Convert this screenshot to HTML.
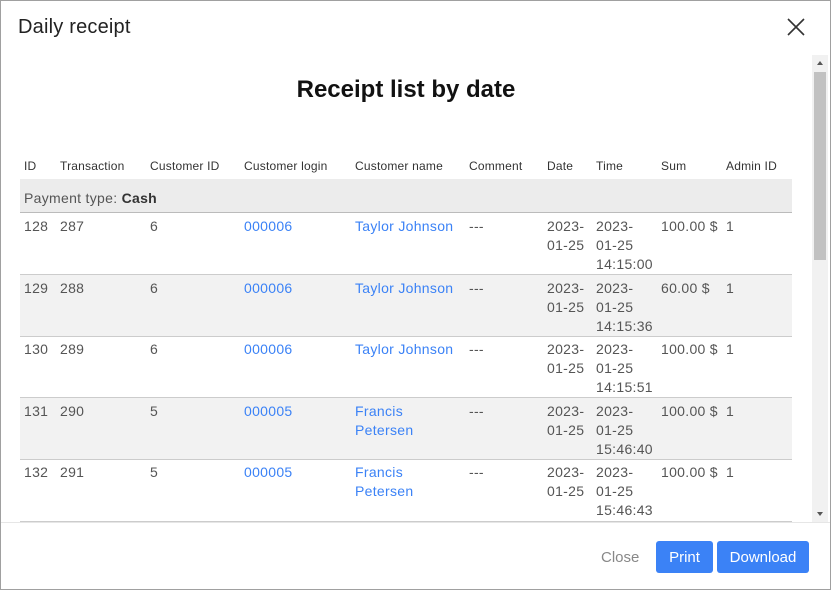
<!DOCTYPE html>
<html><head><meta charset="utf-8"><style>
*{margin:0;padding:0;box-sizing:border-box}
body{width:831px;height:590px;background:#fff;font-family:"Liberation Sans",Arial,sans-serif;color:#444;position:relative;overflow:hidden}
.frame{position:absolute;left:0;top:0;width:831px;height:590px;border:1px solid #a0a0a0}
.title{position:absolute;left:18px;top:16px;font-size:20px;color:#222;letter-spacing:0.2px}
.close{position:absolute;left:786px;top:17px;width:20px;height:20px}
.h1{position:absolute;left:0;width:812px;top:76px;text-align:center;font-size:24px;font-weight:bold;color:#111}
.hd{position:absolute;top:159px;font-size:12px;color:#333;letter-spacing:0.2px}
.band{position:absolute;left:20px;width:772px}
.c{position:absolute;font-size:14px;line-height:19px;color:#555;letter-spacing:0.3px}
.l{color:#3b82f6}
.sb{position:absolute;left:812px;top:55px;width:16px;height:467px;background:#f1f1f1}
.thumb{position:absolute;left:814px;top:72px;width:12px;height:188px;background:#c1c1c1}
.btn{position:absolute;top:541px;height:32px;background:#3b82f6;color:#fff;font-size:15px;border-radius:3px;text-align:center;line-height:33px}
</style></head><body>
<div class="frame"></div>
<div class="title">Daily receipt</div>
<svg class="close" viewBox="0 0 20 20"><path d="M2 2L18 18M18 2L2 18" stroke="#333" stroke-width="1.6"/></svg>
<div class="h1">Receipt list by date</div>
<div class="hd" style="left:24px">ID</div>
<div class="hd" style="left:60px">Transaction</div>
<div class="hd" style="left:150px">Customer ID</div>
<div class="hd" style="left:244px">Customer login</div>
<div class="hd" style="left:355px">Customer name</div>
<div class="hd" style="left:469px">Comment</div>
<div class="hd" style="left:547px">Date</div>
<div class="hd" style="left:596px">Time</div>
<div class="hd" style="left:661px">Sum</div>
<div class="hd" style="left:726px">Admin ID</div>
<div class="band" style="top:179px;height:34px;background:#ececec;border-bottom:1px solid #bbb"></div>
<div class="c" style="left:24px;top:189px;font-size:14px">Payment type: <b style="color:#333">Cash</b></div>
<div class="band" style="top:213px;height:62px;border-bottom:1px solid #ccc"></div>
<div class="band" style="top:275px;height:62px;background:#f2f2f2;border-bottom:1px solid #ccc"></div>
<div class="band" style="top:337px;height:61px;border-bottom:1px solid #ccc"></div>
<div class="band" style="top:398px;height:62px;background:#f2f2f2;border-bottom:1px solid #ccc"></div>
<div class="band" style="top:460px;height:62px;border-bottom:1px solid #ccc"></div>

<div class="c" style="left:24px;top:217px">128</div><div class="c" style="left:60px;top:217px">287</div><div class="c" style="left:150px;top:217px">6</div><div class="c l" style="left:244px;top:217px">000006</div><div class="c l" style="left:355px;top:217px">Taylor Johnson</div><div class="c" style="left:469px;top:217px">---</div><div class="c" style="left:547px;top:217px">2023-<br>01-25</div><div class="c" style="left:596px;top:217px">2023-<br>01-25<br>14:15:00</div><div class="c" style="left:661px;top:217px">100.00 $</div><div class="c" style="left:726px;top:217px">1</div>

<div class="c" style="left:24px;top:279px">129</div><div class="c" style="left:60px;top:279px">288</div><div class="c" style="left:150px;top:279px">6</div><div class="c l" style="left:244px;top:279px">000006</div><div class="c l" style="left:355px;top:279px">Taylor Johnson</div><div class="c" style="left:469px;top:279px">---</div><div class="c" style="left:547px;top:279px">2023-<br>01-25</div><div class="c" style="left:596px;top:279px">2023-<br>01-25<br>14:15:36</div><div class="c" style="left:661px;top:279px">60.00 $</div><div class="c" style="left:726px;top:279px">1</div>

<div class="c" style="left:24px;top:340px">130</div><div class="c" style="left:60px;top:340px">289</div><div class="c" style="left:150px;top:340px">6</div><div class="c l" style="left:244px;top:340px">000006</div><div class="c l" style="left:355px;top:340px">Taylor Johnson</div><div class="c" style="left:469px;top:340px">---</div><div class="c" style="left:547px;top:340px">2023-<br>01-25</div><div class="c" style="left:596px;top:340px">2023-<br>01-25<br>14:15:51</div><div class="c" style="left:661px;top:340px">100.00 $</div><div class="c" style="left:726px;top:340px">1</div>

<div class="c" style="left:24px;top:402px">131</div><div class="c" style="left:60px;top:402px">290</div><div class="c" style="left:150px;top:402px">5</div><div class="c l" style="left:244px;top:402px">000005</div><div class="c l" style="left:355px;top:402px">Francis<br>Petersen</div><div class="c" style="left:469px;top:402px">---</div><div class="c" style="left:547px;top:402px">2023-<br>01-25</div><div class="c" style="left:596px;top:402px">2023-<br>01-25<br>15:46:40</div><div class="c" style="left:661px;top:402px">100.00 $</div><div class="c" style="left:726px;top:402px">1</div>

<div class="c" style="left:24px;top:463px">132</div><div class="c" style="left:60px;top:463px">291</div><div class="c" style="left:150px;top:463px">5</div><div class="c l" style="left:244px;top:463px">000005</div><div class="c l" style="left:355px;top:463px">Francis<br>Petersen</div><div class="c" style="left:469px;top:463px">---</div><div class="c" style="left:547px;top:463px">2023-<br>01-25</div><div class="c" style="left:596px;top:463px">2023-<br>01-25<br>15:46:43</div><div class="c" style="left:661px;top:463px">100.00 $</div><div class="c" style="left:726px;top:463px">1</div>

<div style="position:absolute;left:1px;top:522px;width:829px;height:1px;background:#e6e6e6"></div>
<div class="sb"></div><div class="thumb"></div>
<div style="position:absolute;left:817px;top:61px;border:3px solid transparent;border-bottom:4px solid #555;border-top:0"></div>
<div style="position:absolute;left:817px;top:512px;border:3px solid transparent;border-top:4px solid #555;border-bottom:0"></div>
<div style="position:absolute;left:601px;top:549px;font-size:15px;color:#888">Close</div>
<div class="btn" style="left:656px;width:57px">Print</div>
<div class="btn" style="left:717px;width:92px">Download</div>
</body></html>
